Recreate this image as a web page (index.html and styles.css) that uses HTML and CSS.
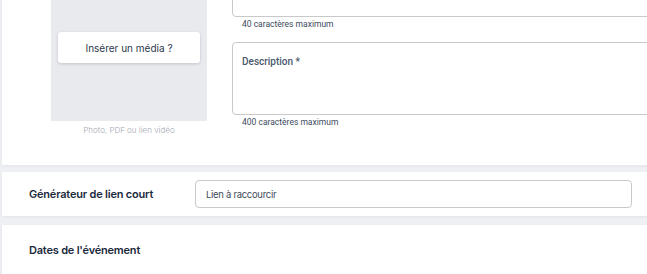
FILE: index.html
```html
<!DOCTYPE html>
<html>
<head>
    <title>Événement</title>
    <link rel="stylesheet" href="styles.css">
</head>
<body>
    <div class="page">
        <div class="card card-main">
            <div class="media-col">
                <div class="media-box">
                    <button class="media-btn" type="button">Insérer un média ?</button>
                </div>
                <div class="media-caption">Photo, PDF ou lien vidéo</div>
            </div>
            <div class="fields-col">
                <input class="field field-title" type="text">
                <div class="hint">40 caractères maximum</div>
                <div class="field field-desc">Description *</div>
                <div class="hint">400 caractères maximum</div>
            </div>
        </div>

        <div class="card card-row">
            <label class="row-label" for="shortlink">Générateur de lien court</label>
            <input class="field field-link" id="shortlink" type="text" placeholder="Lien à raccourcir">
        </div>

        <div class="card card-row card-last">
            <div class="row-label">Dates de l'événement</div>
        </div>
    </div>
</body>
</html>
```

FILE: styles.css
```css
body {
    margin: 0;
    background-color: #eef0f3;
    font-family: Inter, "Noto Sans", sans-serif;
    overflow: hidden;
}

.page {
    padding-left: 2px;
    width: 700px;
}

.card {
    background-color: #fff;
    box-shadow: 0 1px 3px rgba(30, 40, 60, 0.06);
}

/* --- Bloc média + titre / description --- */
.card-main {
    display: flex;
    gap: 25px;
    margin-top: -26px;
    padding: 0 0 30px 49px;
}

.media-col {
    width: 156px;
}

.media-box {
    height: 147px;
    background-color: #e9eaee;
    display: flex;
    align-items: center;
    justify-content: center;
}

.media-btn {
    width: 142px;
    height: 31px;
    background-color: #fff;
    border: none;
    border-radius: 3px;
    box-shadow: 0 1px 3px rgba(20, 30, 50, 0.18);
    font-family: inherit;
    font-size: 10px;
    color: #2b394c;
    cursor: pointer;
}

.media-caption {
    margin-top: 4px;
    text-align: center;
    font-size: 8px;
    font-weight: 300;
    color: #a3a7b0;
}

.fields-col {
    width: 450px;
}

.field {
    display: block;
    box-sizing: border-box;
    width: 100%;
    border: 1px solid #c9c9c9;
    border-radius: 4px;
    background-color: #fff;
}

.field-title {
    height: 43px;
}

.field-desc {
    height: 73px;
    margin-top: 12px;
    padding: 13px 9px;
    font-family: Roboto, sans-serif;
    font-size: 10px;
    font-weight: 500;
    color: #4a586c;
}

.hint {
    margin-top: 2px;
    padding-left: 10px;
    font-family: Roboto, sans-serif;
    font-size: 8.5px;
    color: #3d4b5c;
    line-height: 11px;
}

/* --- Lignes simples --- */
.card-row {
    display: flex;
    align-items: center;
    margin-top: 7px;
    padding-left: 27px;
    height: 44px;
}

.row-label {
    width: 166px;
    font-size: 11px;
    font-weight: 600;
    color: #1b2a3d;
    letter-spacing: -0.2px;
}

.field-link {
    width: 437px;
    height: 28px;
    padding: 0 10px;
    font-family: inherit;
    font-size: 9.5px;
    letter-spacing: -0.3px;
    color: #3a4859;
}

.field-link::placeholder {
    color: #3e4b5c;
}

.card-last {
    margin-top: 9px;
    height: 50px;
}
```
